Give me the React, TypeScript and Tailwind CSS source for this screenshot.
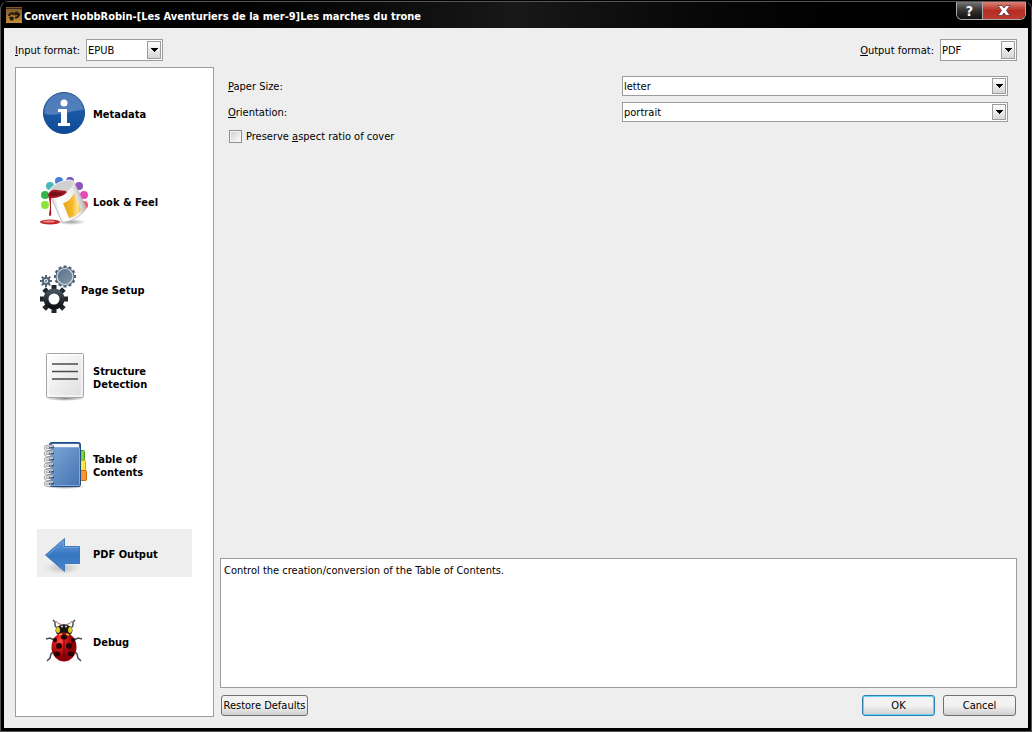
import { useState } from "react";
import type { ComponentType, ReactNode } from "react";

function AppIcon() {
  return (
    <svg width="16" height="16" viewBox="0 0 16 16" aria-hidden="true">
      <defs>
        <linearGradient id="app-bg" x1="0" y1="0" x2="0" y2="1">
          <stop offset="0" stopColor="#76572c" />
          <stop offset="1" stopColor="#c58d3c" />
        </linearGradient>
      </defs>
      <rect width="16" height="16" fill="url(#app-bg)" />
      <path d="M0 1.500h16" stroke="#3a2a14" />
      <path d="M3 9c0-2 2-3 4-2.500L8 8M13 7c0 2-2 4-4 3.500" fill="none" stroke="#231a0e" strokeWidth="2" />
      <path d="M8 5.500l3-1 2 1.500 1.500 1-2.500 1-3 .5zM3 10l3-.5 2 1.500-1 2.500H4.500z" fill="#231a0e" />
    </svg>
  );
}

function InfoIcon() {
  return (
    <svg width="48" height="48" viewBox="0 0 48 48" aria-hidden="true">
      <defs>
        <linearGradient id="info-bg" x1="0" y1="0" x2="0" y2="1">
          <stop offset="0" stopColor="#3f70b4" />
          <stop offset="0.5" stopColor="#1b57a4" />
          <stop offset="1" stopColor="#0c4a98" />
        </linearGradient>
        <linearGradient id="info-shine" x1="0" y1="0" x2="0" y2="1">
          <stop offset="0" stopColor="#fff" stopOpacity="0.1" />
          <stop offset="1" stopColor="#fff" stopOpacity="0.25" />
        </linearGradient>
      </defs>
      <circle cx="24" cy="24" r="20.500" fill="url(#info-bg)" stroke="#164a90" />
      <path d="M4.500 25C4 13 13 4 24 4s19.500 8 19.500 17C34 20 19 28 4.500 25z" fill="url(#info-shine)" />
      <circle cx="24" cy="14" r="3.500" fill="#fff" />
      <path d="M18 20h9v14h3v3H18v-3h3V23h-3z" fill="#fff" />
    </svg>
  );
}

function PaintIcon() {
  return (
    <svg width="48" height="48" viewBox="0 0 48 48" aria-hidden="true">
      <defs>
        <linearGradient id="can" x1="0" y1="0.6" x2="1" y2="0.3">
          <stop offset="0" stopColor="#b7b7b7" />
          <stop offset="0.25" stopColor="#fff" />
          <stop offset="0.7" stopColor="#eee" />
          <stop offset="1" stopColor="#999" />
        </linearGradient>
        <linearGradient id="can-label" x1="0" y1="0" x2="1" y2="0">
          <stop offset="0" stopColor="#e9a61c" />
          <stop offset="0.5" stopColor="#f3b829" />
          <stop offset="0.8" stopColor="#ffe393" />
          <stop offset="1" stopColor="#e8b94c" />
        </linearGradient>
        <radialGradient id="can-shadow">
          <stop offset="0" stopColor="#777" stopOpacity="0.7" />
          <stop offset="1" stopColor="#777" stopOpacity="0" />
        </radialGradient>
      </defs>
      <circle cx="19" cy="4" r="4" fill="#4a7fd6" />
      <circle cx="30" cy="4" r="4" fill="#6656bb" />
      <circle cx="10" cy="9" r="4" fill="#48b7bc" />
      <circle cx="39" cy="9" r="4" fill="#8e55be" />
      <circle cx="5" cy="18" r="4" fill="#35b449" />
      <circle cx="44" cy="18" r="4" fill="#e648ba" />
      <circle cx="5" cy="28" r="4" fill="#8be43a" />
      <circle cx="44" cy="28" r="4" fill="#ef5368" />
      <ellipse cx="31" cy="45" rx="15" ry="3" fill="url(#can-shadow)" />
      <ellipse cx="10" cy="45" rx="10" ry="2.500" fill="#c52529" />
      <ellipse cx="9" cy="44.500" rx="6" ry="1" fill="#ef8d8c" />
      <path d="M9 16L34 5l12 25c0 6-15 16-24 15z" fill="url(#can)" stroke="#aaa" strokeWidth="0.700" />
      <path d="M23 26c5-1 9-5 11-10l7 17c-2 4-7 7-12 8z" fill="url(#can-label)" />
      <ellipse cx="21.500" cy="11" rx="13.500" ry="6" transform="rotate(-26 21.500 11)" fill="#cfcfcf" stroke="#eee" />
      <path d="M8 18c1-4 5-6 9-5 5 1 9 0 10 2-3 4-10 6-16 6v9c0 5 1 9-1 9s0-5 0-9c0-5-1-8-2-12z" fill="#a81520" />
      <path d="M10 16c5-2 8 0 14 0-5 3-9 3-14 3z" fill="#731017" />
    </svg>
  );
}

const TEETH = [0, 45, 90, 135, 180, 225, 270, 315];
const FINE_TEETH = [0, 30, 60, 90, 120, 150, 180, 210, 240, 270, 300, 330];

function GearsIcon() {
  return (
    <svg width="36" height="48" viewBox="0 0 36 48" aria-hidden="true">
      <defs>
        <linearGradient id="gear-dark" x1="0" y1="0" x2="0" y2="1">
          <stop offset="0" stopColor="#45535f" />
          <stop offset="1" stopColor="#111" />
        </linearGradient>
        <linearGradient id="gear-blue" x1="0" y1="0" x2="1" y2="1">
          <stop offset="0" stopColor="#587087" />
          <stop offset="1" stopColor="#8498aa" />
        </linearGradient>
      </defs>
      <g fill="#4e6275">
        {FINE_TEETH.map((a) => (
          <rect key={a} x="23.500" y="0.500" width="3" height="4" transform={`rotate(${a} 25 11.500)`} />
        ))}
      </g>
      <circle cx="25" cy="11.500" r="9.500" fill="#536a7e" />
      <circle cx="25" cy="11.500" r="8" fill="url(#gear-blue)" stroke="#d5dde4" strokeWidth="1.200" />
      <g fill="#526678">
        {TEETH.map((a) => (
          <rect key={a} x="5" y="10" width="2" height="4" transform={`rotate(${a} 6 16)`} />
        ))}
      </g>
      <circle cx="6" cy="16" r="3" fill="#fff" stroke="#526678" strokeWidth="2" />
      <circle cx="6" cy="16" r="1" fill="#526678" />
      <g fill="#20272d">
        {TEETH.map((a) => (
          <rect key={a} x="11.500" y="20" width="5" height="7" transform={`rotate(${a} 14 34)`} />
        ))}
      </g>
      <circle cx="14" cy="34" r="8" fill="#fff" stroke="url(#gear-dark)" strokeWidth="5" />
    </svg>
  );
}

function DocumentIcon() {
  return (
    <svg width="48" height="48" viewBox="0 0 48 48" aria-hidden="true">
      <defs>
        <linearGradient id="sheet" x1="0" y1="0" x2="1" y2="1">
          <stop offset="0" stopColor="#fff" />
          <stop offset="1" stopColor="#dedede" />
        </linearGradient>
        <radialGradient id="sheet-shadow">
          <stop offset="0" stopColor="#666" stopOpacity="0.8" />
          <stop offset="1" stopColor="#666" stopOpacity="0" />
        </radialGradient>
      </defs>
      <ellipse cx="25" cy="45.500" rx="20" ry="2.500" fill="url(#sheet-shadow)" />
      <rect x="6.500" y="0.500" width="37" height="44" rx="1" fill="url(#sheet)" stroke="#a5a5a5" />
      <rect x="8" y="2" width="34" height="41" fill="none" stroke="#fff" />
      <path d="M12 11h26M12 18.500h26M12 26h26" stroke="#4b4b4b" strokeWidth="1.700" />
    </svg>
  );
}

function NotebookIcon() {
  return (
    <svg width="48" height="48" viewBox="0 0 48 48" aria-hidden="true">
      <defs>
        <linearGradient id="cover" x1="0" y1="0" x2="1" y2="1">
          <stop offset="0" stopColor="#7ba5d5" />
          <stop offset="1" stopColor="#4674b2" />
        </linearGradient>
        <radialGradient id="book-shadow">
          <stop offset="0" stopColor="#555" stopOpacity="0.8" />
          <stop offset="1" stopColor="#555" stopOpacity="0" />
        </radialGradient>
      </defs>
      <ellipse cx="25" cy="45.500" rx="21" ry="2.500" fill="url(#book-shadow)" />
      <rect x="39.500" y="9.500" width="5" height="11" rx="1" fill="#7bd335" stroke="#4e9a20" />
      <rect x="39.500" y="19.500" width="6" height="11" rx="1" fill="#fce83b" stroke="#caa90e" />
      <rect x="39.500" y="29.500" width="7" height="10" rx="1" fill="#fa962d" stroke="#cc660d" />
      <rect x="9.500" y="1.500" width="31" height="44" rx="2" fill="#3c6cab" stroke="#204a83" />
      <rect x="12" y="3" width="27" height="5" rx="1" fill="#f3f5f8" />
      <rect x="10.500" y="6.500" width="29" height="38" rx="1" fill="url(#cover)" stroke="#84aadb" />
      {[5, 11, 17, 23, 29, 35, 41].map((y) => (
        <g key={y} fill="none" strokeLinecap="round">
          <circle cx="12.500" cy={y + 1} r="1.500" fill="#244777" />
          <path d={`M12.500 ${y}H8c-4 0-4 3.500 0 3.500h2`} stroke="#8a8f94" strokeWidth="2.400" />
          <path d={`M12.500 ${y}H8c-4 0-4 3.500 0 3.500h2`} stroke="#f2f2f2" strokeWidth="1.100" />
        </g>
      ))}
    </svg>
  );
}

function ArrowIcon() {
  return (
    <svg width="48" height="48" viewBox="0 0 48 48" aria-hidden="true">
      <defs>
        <linearGradient id="arrow-fill" x1="0" y1="0" x2="0" y2="1">
          <stop offset="0" stopColor="#6c9fdb" />
          <stop offset="0.5" stopColor="#3676c2" />
          <stop offset="1" stopColor="#4b86cc" />
        </linearGradient>
        <radialGradient id="arrow-shadow">
          <stop offset="0" stopColor="#777" stopOpacity="0.4" />
          <stop offset="1" stopColor="#777" stopOpacity="0" />
        </radialGradient>
      </defs>
      <ellipse cx="22" cy="39" rx="18" ry="6" fill="url(#arrow-shadow)" />
      <path d="M5.500 26L24.500 9.500v8h15v17h-15v8z" fill="url(#arrow-fill)" stroke="#3f78bd" />
      <path d="M7.500 26L23.500 12v6.500h15" fill="none" stroke="#6fa0d8" />
    </svg>
  );
}

function LadybugIcon() {
  return (
    <svg width="48" height="48" viewBox="0 0 48 48" aria-hidden="true">
      <defs>
        <radialGradient id="shell" cx="0.35" cy="0.3">
          <stop offset="0" stopColor="#ff5548" />
          <stop offset="0.4" stopColor="#e31b1c" />
          <stop offset="1" stopColor="#900009" />
        </radialGradient>
      </defs>
      <g fill="none" stroke="#4d4d55" strokeWidth="1.500">
        <path d="M17 12l-2-4v-3l-2-2M31 12l2-4v-3l2-2" />
        <path d="M14 23l-4-2-4 1M34 23l4-2 4 1M14 34l-3 3-1 4-3 3M34 34l3 3 1 4 3 3" />
      </g>
      <path d="M16 4c3 5 13 5 16 0" fill="none" stroke="#aa5967" />
      <ellipse cx="24" cy="13.500" rx="8.500" ry="6" fill="#161616" />
      <ellipse cx="18" cy="13" rx="2" ry="3" fill="#e1cf24" />
      <ellipse cx="30" cy="13" rx="2" ry="3" fill="#e1cf24" />
      <circle cx="22" cy="9.500" r="1" fill="#ddd" />
      <circle cx="26" cy="9.500" r="1" fill="#ddd" />
      <ellipse cx="24" cy="30" rx="12.500" ry="14.500" fill="url(#shell)" />
      <path d="M24 16v28" stroke="#650006" />
      <g fill="#260305">
        <ellipse cx="24" cy="20" rx="3" ry="2.500" />
        <circle cx="19" cy="29" r="3" />
        <circle cx="29" cy="29" r="3" />
        <ellipse cx="15" cy="23" rx="2" ry="2.500" />
        <ellipse cx="33" cy="23" rx="2" ry="2.500" />
        <ellipse cx="17" cy="37" rx="3" ry="2.500" />
        <ellipse cx="31" cy="37" rx="3" ry="2.500" />
      </g>
      <path d="M19 18l3-1M26 17l3 1" stroke="#e1b724" strokeWidth="1.500" />
    </svg>
  );
}

const pages: { label: string; icon: ComponentType }[] = [
  { label: "Metadata", icon: InfoIcon },
  { label: "Look & Feel", icon: PaintIcon },
  { label: "Page Setup", icon: GearsIcon },
  { label: "Structure Detection", icon: DocumentIcon },
  { label: "Table of Contents", icon: NotebookIcon },
  { label: "PDF Output", icon: ArrowIcon },
  { label: "Debug", icon: LadybugIcon },
];

// Label with its first letter marked as the keyboard shortcut
function FieldLabel({ htmlFor, text }: { htmlFor: string; text: string }) {
  return (
    <label htmlFor={htmlFor}>
      <span className="underline underline-offset-1">{text[0]}</span>
      {text.slice(1)}
    </label>
  );
}

function Select({ id, options, className }: { id: string; options: string[]; className: string }) {
  return (
    <div className={`relative ${className}`}>
      <select
        id={id}
        className="block h-full w-full appearance-none border border-[#9c9c9c] bg-white pr-5 pl-px outline-none"
      >
        {options.map((option) => (
          <option key={option}>{option}</option>
        ))}
      </select>
      <span className="pointer-events-none absolute inset-y-0.5 right-0.5 flex w-3.5 items-center justify-center border border-[#9c9c9c] bg-linear-to-b from-white to-[#d6d6d6]">
        <svg width="7" height="4" viewBox="0 0 7 4" shapeRendering="crispEdges" aria-hidden="true">
          <path d="M0 0h7v1H0zM1 1h5v1H1zM2 2h3v1H2zM3 3h1v1H3z" />
        </svg>
      </span>
    </div>
  );
}

function Button({ children, className }: { children: ReactNode; className: string }) {
  return (
    <button
      type="button"
      className={`h-[21px] rounded-[3px] border bg-linear-to-b from-[#f2f2f2] from-50% to-[#cfcfcf] ${className}`}
    >
      {children}
    </button>
  );
}

export default function App() {
  const [active, setActive] = useState("PDF Output");

  return (
    <div className="flex min-h-screen flex-col bg-black pt-px font-['DejaVu_Sans_Condensed','Noto_Sans',sans-serif] text-[11px] leading-[13px] text-black">
      <div className="flex grow flex-col rounded-t-lg border border-[#555] bg-black px-[3px] pb-[3px]">
        {/* Title bar */}
        <header className="flex h-[26px] items-start justify-between bg-linear-to-r from-black via-[#181818] to-black">
          <div className="flex items-center gap-0.5 self-center pl-0.5 text-white">
            <AppIcon />
            <h1 className="pt-0.5 font-bold">Convert HobbRobin-[Les Aventuriers de la mer-9]Les marches du trone</h1>
          </div>
          <div className="mr-0.5 flex h-[18px] overflow-hidden rounded-b-md border border-t-0 border-[#aaa]">
            <button
              type="button"
              aria-label="Help"
              className="flex w-[26px] items-center justify-center border-r border-[#aaa] bg-linear-to-b from-[#777] via-[#333] via-50% to-[#111] text-sm font-bold text-white"
            >
              ?
            </button>
            <button
              type="button"
              aria-label="Close"
              className="flex w-[42px] items-center justify-center bg-linear-to-b from-[#dc8178] via-[#b52b20] via-50% to-[#bd3b30]"
            >
              <svg width="14" height="11" viewBox="0 0 14 11" aria-hidden="true">
                <path
                  d="M1 .5h4L7 3l2-2.500h4L9.500 5.500l3.500 5H9L7 8l-2 2.500H1l3.500-5z"
                  fill="#fff"
                  stroke="#5b3532"
                  strokeWidth="0.800"
                />
              </svg>
            </button>
          </div>
        </header>

        <main className="flex grow flex-col gap-1.5 bg-[#eee] p-[11px]">
          <div className="flex justify-between">
            <div className="flex items-center gap-1.5">
              <FieldLabel htmlFor="input-format" text="Input format:" />
              <Select id="input-format" options={["EPUB"]} className="h-[22px] w-[77px]" />
            </div>
            <div className="flex items-center gap-1.5">
              <FieldLabel htmlFor="output-format" text="Output format:" />
              <Select id="output-format" options={["PDF"]} className="h-[22px] w-[77px]" />
            </div>
          </div>

          <div className="flex grow gap-1.5">
            {/* Page list */}
            <nav className="flex w-[199px] shrink-0 flex-col gap-10 border border-[#9c9c9c] bg-white px-[21px] pt-[21px]">
              {pages.map(({ label, icon: Icon }) => (
                <button
                  key={label}
                  type="button"
                  onClick={() => setActive(label)}
                  className={`flex h-12 items-center gap-[5px] pl-[3px] text-left font-bold ${
                    active === label ? "bg-[#eee]" : ""
                  }`}
                >
                  <Icon />
                  <span className="w-20 pt-0.5">{label}</span>
                </button>
              ))}
            </nav>

            <div className="flex grow flex-col">
              {/* Options */}
              <div className="grid grow grid-cols-2 content-start items-center gap-x-2 gap-y-1.5 pt-[9px] pr-[9px] pl-2">
                <FieldLabel htmlFor="paper-size" text="Paper Size:" />
                <Select id="paper-size" options={["letter"]} className="h-5" />
                <FieldLabel htmlFor="orientation" text="Orientation:" />
                <Select id="orientation" options={["portrait"]} className="h-5" />
                <label className="flex items-center gap-1 pt-0.5 pl-px">
                  <input
                    type="checkbox"
                    className="size-[13px] appearance-none border border-[#8e8f8f] bg-linear-to-br from-[#ccc] to-white shadow-[inset_0_0_0_1px_#f4f4f4] checked:bg-[#3676c2]"
                  />
                  <span>
                    Preserve <span className="underline underline-offset-1">a</span>spect ratio of cover
                  </span>
                </label>
              </div>

              <textarea
                readOnly
                aria-label="Description"
                value="Control the creation/conversion of the Table of Contents."
                className="h-[130px] resize-none border border-[#9c9c9c] bg-white px-[3px] py-[5px] outline-none"
              />

              <div className="flex justify-between px-px pt-[7px] pb-px">
                <Button className="w-[87px] border-[#707070]">Restore Defaults</Button>
                <div className="flex gap-2">
                  <Button className="w-[73px] border-[#2c7fae] shadow-[inset_0_0_0_1px_#67d3f5]">OK</Button>
                  <Button className="w-[73px] border-[#707070]">Cancel</Button>
                </div>
              </div>
            </div>
          </div>
        </main>
      </div>
    </div>
  );
}
